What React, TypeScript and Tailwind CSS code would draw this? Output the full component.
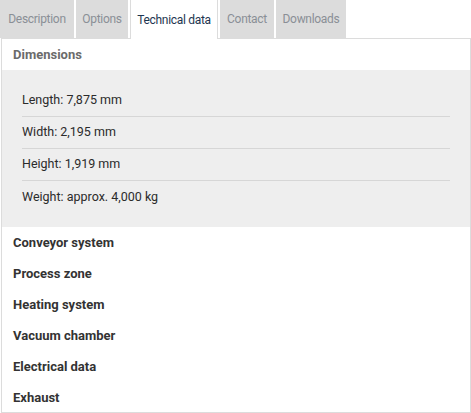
import React, { useState } from 'react';

const TABS = [
  { label: 'Description', width: 'w-[74px]' },
  { label: 'Options', width: 'w-[52px]' },
  { label: 'Technical data', width: 'w-[88px]' },
  { label: 'Contact', width: 'w-[54px]' },
  { label: 'Downloads', width: 'w-[70px]' },
];

const DIMENSIONS = [
  'Length: 7,875 mm',
  'Width: 2,195 mm',
  'Height: 1,919 mm',
  'Weight: approx. 4,000 kg',
];

const SECTIONS = [
  'Conveyor system',
  'Process zone',
  'Heating system',
  'Vacuum chamber',
  'Electrical data',
  'Exhaust',
];

export default function App() {
  const [active, setActive] = useState('Technical data');

  return (
    <div className="w-[471px] h-[413px] overflow-hidden bg-white font-['Roboto',sans-serif]">
      {/* Tabs */}
      <div className="relative z-10 flex gap-[2px] h-[39px]">
        {TABS.map((tab) => {
          const isActive = tab.label === active;
          return (
            <button
              key={tab.label}
              onClick={() => setActive(tab.label)}
              className={`${tab.width} flex items-center justify-center whitespace-nowrap tracking-[-0.3px] text-[12px] ${
                isActive
                  ? 'h-[39px] bg-white text-[#1d3550] border-x border-[#dcdcdc]'
                  : 'h-[38px] self-start bg-[#dcdcdc] text-[#8a8f96]'
              }`}
            >
              {tab.label}
            </button>
          );
        })}
      </div>

      {/* Panel */}
      <div className="-mt-px ml-px border border-[#dcdcdc] h-[375px]">
        <div className="h-[31px] flex items-center px-[11px] text-[13px] font-bold text-[#6b6b6b]">
          Dimensions
        </div>

        <div className="bg-[#eeeeee] pt-[15px] pb-[14px] px-[20px]">
          {DIMENSIONS.map((d, i) => (
            <div
              key={d}
              className={`h-[32px] flex items-center text-[12.5px] text-[#2b2b2b] ${
                i < DIMENSIONS.length - 1 ? 'border-b border-[#d6d6d6]' : ''
              }`}
            >
              {d}
            </div>
          ))}
        </div>

        {SECTIONS.map((s) => (
          <div key={s} className="h-[31px] flex items-center px-[11px] text-[13px] font-bold text-[#333333]">
            {s}
          </div>
        ))}
      </div>
    </div>
  );
}
